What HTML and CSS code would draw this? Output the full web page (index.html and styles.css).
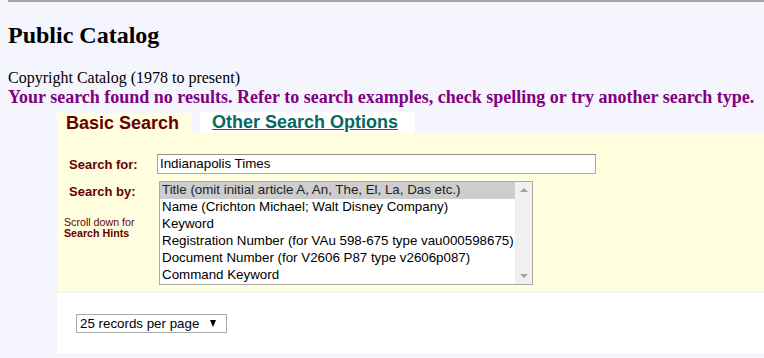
FILE: index.html
```html
<!DOCTYPE html>
<html>
<head>
<meta charset="utf-8">
<title>Public Catalog</title>
<link rel="stylesheet" href="styles.css">
</head>
<body>
<hr class="top-rule">
<h2 class="title">Public Catalog</h2>
<div class="catalog">Copyright Catalog (1978 to present)</div>
<div class="notice">Your search found no results. Refer to search examples, check spelling or try another search type.</div>
<div class="search">
  <div class="tabs">
    <div class="tab tab-active">Basic Search</div>
    <div class="tab tab-other"><a href="#" class="tab-link">Other Search Options</a></div>
  </div>
  <div class="panel">
    <div class="row row-for">
      <div class="label-col"><span class="label">Search for:</span></div>
      <div class="input">Indianapolis Times</div>
    </div>
    <div class="row row-by">
      <div class="label-col">
        <div class="label label-by">Search by:</div>
        <div class="hint">Scroll down for</div>
        <div class="hint hint-strong">Search Hints</div>
      </div>
      <div class="listbox">
        <div class="options">
          <div class="option option-selected">Title (omit initial article A, An, The, El, La, Das etc.)</div>
          <div class="option">Name (Crichton Michael; Walt Disney Company)</div>
          <div class="option">Keyword</div>
          <div class="option">Registration Number (for VAu 598-675 type vau000598675)</div>
          <div class="option">Document Number (for V2606 P87 type v2606p087)</div>
          <div class="option">Command Keyword</div>
        </div>
        <div class="scrollbar">
          <span class="arrow arrow-up"></span>
          <span class="arrow arrow-down"></span>
        </div>
      </div>
    </div>
  </div>
  <div class="footer">
    <div class="select">
      <span class="select-text">25 records per page</span>
      <span class="caret"></span>
    </div>
  </div>
</div>
</body>
</html>
```

FILE: styles.css
```css
html, body {
  background: #f5f5fd;
}
body {
  margin: 0;
  padding: 0 0 0 8px;
  font-family: "Liberation Serif", "Times New Roman", serif;
  color: #000;
}
.top-rule {
  margin: 0;
  height: 0;
  border: 0;
  border-top: 2px solid #a4a4a4;
}
.title {
  font-size: 24px;
  font-weight: bold;
  margin: 20px 0 20px 0;
}
.catalog {
  font-size: 16px;
}
.notice {
  font-size: 18px;
  font-weight: bold;
  color: #800080;
  white-space: nowrap;
}
.search {
  margin: 4px 0 0 49px;
  font-family: "Liberation Sans", Arial, sans-serif;
}
.tabs {
  display: flex;
  height: 21px;
  align-items: stretch;
}
.tab {
  font-size: 18px;
  font-weight: bold;
  line-height: 21px;
}
.tab-active {
  background: #ffffe0;
  color: #660000;
  width: 126px;
  padding-left: 9px;
  margin-top: 1px;
  line-height: 20px;
}
.tab-other {
  background: #ffffff;
  margin-left: 8px;
  width: 203px;
  padding-left: 12px;
}
.tab-link {
  color: #0a6660;
  text-decoration: underline;
}
.panel {
  background: #ffffe0;
  padding: 21px 0 6px 0;
}
.row {
  display: flex;
}
.row-for {
  align-items: center;
}
.row-by {
  margin-top: 7px;
  align-items: flex-start;
}
.label-col {
  width: 100px;
  padding-left: 7px;
  box-sizing: border-box;
}
.label {
  font-size: 13px;
  font-weight: bold;
  color: #660000;
  padding-left: 5px;
}
.label-by {
  display: block;
  line-height: 15px;
  padding-top: 3px;
}
.hint {
  font-size: 10.67px;
  color: #660000;
  line-height: 11px;
}
.label-by + .hint {
  margin-top: 18px;
}
.hint-strong {
  font-weight: bold;
}
.input {
  width: 435px;
  height: 18px;
  border: 1px solid #a9a9a9;
  border-top-color: #8f8f8f;
  background: #fff;
  font-size: 13.33px;
  line-height: 18px;
  padding-left: 2px;
  color: #000;
}
.listbox {
  margin-left: 2px;
  width: 372px;
  height: 102px;
  border: 1px solid #a9a9a9;
  background: #fff;
  display: flex;
}
.options {
  flex: 1;
}
.option {
  height: 17px;
  line-height: 16px;
  font-size: 13.33px;
  padding-left: 2px;
  white-space: nowrap;
  color: #000;
  box-sizing: border-box;
}
.option-selected {
  background: #cdcdcd;
  color: #222;
}
.scrollbar {
  width: 17px;
  background: #f0f0f0;
  display: flex;
  flex-direction: column;
  justify-content: space-between;
  align-items: center;
  padding: 6px 0;
  box-sizing: border-box;
}
.arrow {
  width: 0;
  height: 0;
  border-left: 4px solid transparent;
  border-right: 4px solid transparent;
}
.arrow-up {
  border-bottom: 4px solid #a3a3a3;
}
.arrow-down {
  border-top: 4px solid #a3a3a3;
}
.footer {
  margin-top: 2px;
  background: #ffffff;
  height: 60px;
  padding: 21px 0 0 19px;
  box-sizing: border-box;
}
.select {
  height: 17px;
  border: 1px solid #a9a9a9;
  background: #fff;
  display: flex;
  align-items: center;
  justify-content: space-between;
  padding: 0 10px 0 3px;
  box-sizing: content-box;
  width: 136px;
}
.select-text {
  font-size: 13.33px;
  color: #000;
}
.caret {
  width: 0;
  height: 0;
  border-left: 3.5px solid transparent;
  border-right: 3.5px solid transparent;
  border-top: 7px solid #000;
}
```
